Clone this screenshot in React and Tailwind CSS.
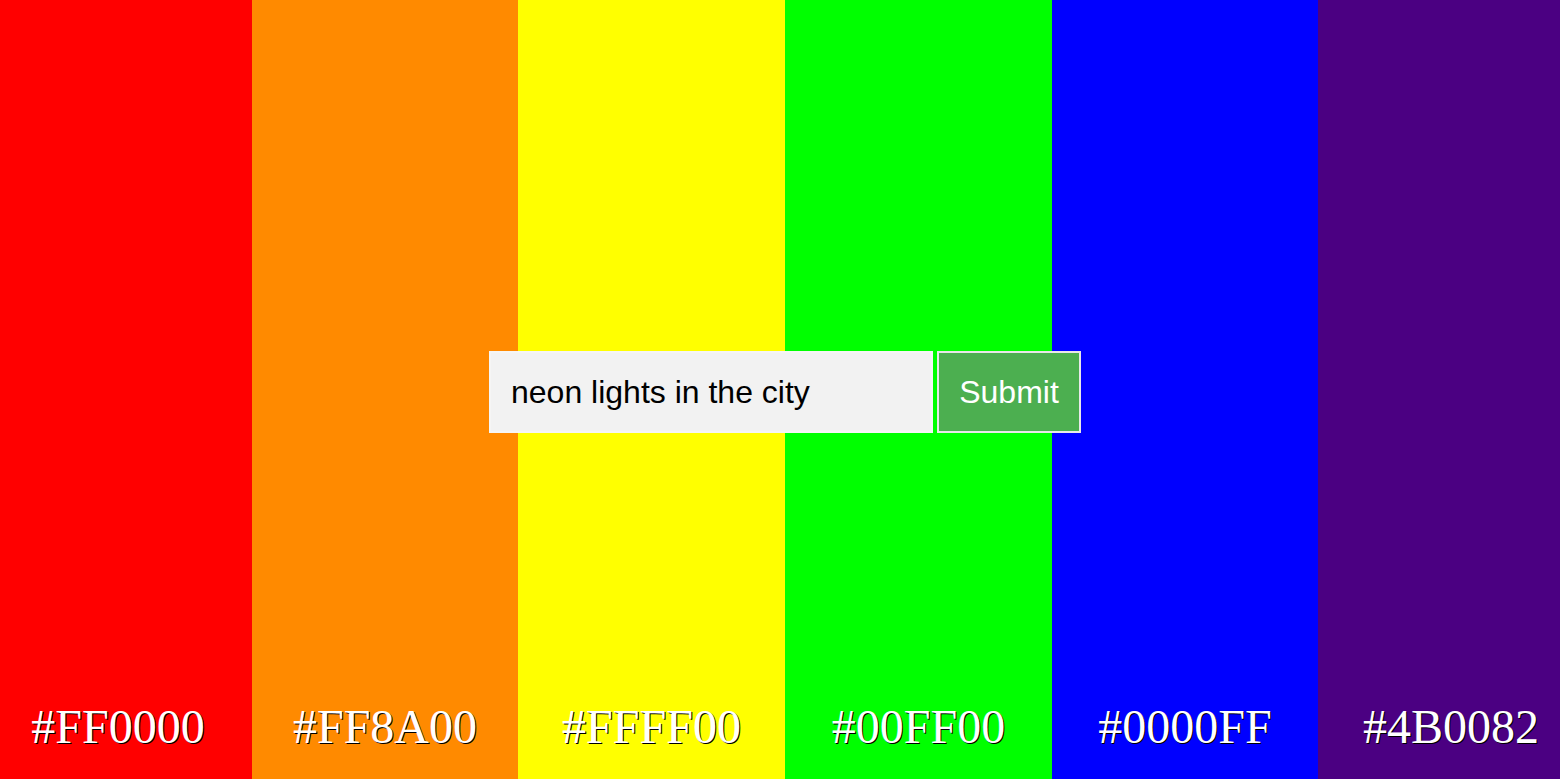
import React from "react";

const cols = [
  { hex: "#FF0000", bg: "bg-[#ff0000]", w: "w-[252px]", shift: "pr-[16px]" },
  { hex: "#FF8A00", bg: "bg-[#ff8a00]", w: "w-[266px]", shift: "" },
  { hex: "#FFFF00", bg: "bg-[#ffff00]", w: "w-[267px]", shift: "" },
  { hex: "#00FF00", bg: "bg-[#00ff00]", w: "w-[267px]", shift: "" },
  { hex: "#0000FF", bg: "bg-[#0000ff]", w: "w-[266px]", shift: "" },
  { hex: "#4B0082", bg: "bg-[#4b0082]", w: "flex-1", shift: "pl-[24px]" },
];

export default function App() {
  return (
    <div className="relative w-[1560px] h-[779px] overflow-hidden flex">
      {cols.map((c) => (
        <div key={c.hex} className={`${c.bg} ${c.w} shrink-0 h-full flex flex-col justify-end`}>
          <div
            className={`text-center text-white text-[48px] leading-[53px] pb-[26px] ${c.shift} [text-shadow:1px_1px_0_#000]`}
            style={{ fontFamily: '"Liberation Serif", "Times New Roman", serif' }}
          >
            {c.hex}
          </div>
        </div>
      ))}
      <div
        className="absolute left-[489px] top-[351px] flex gap-[4px]"
        style={{ fontFamily: '"Liberation Sans", Arial, sans-serif' }}
      >
        <div className="w-[444px] h-[82px] border-2 border-[#f5f5f5] bg-[#f2f2f2] px-[20px] flex items-center text-[32px] text-black">
          neon lights in the city
        </div>
        <div className="w-[144px] h-[82px] border-2 border-[#e8e8e8] bg-[#4caf50] flex items-center justify-center text-[32px] text-white">
          Submit
        </div>
      </div>
    </div>
  );
}
